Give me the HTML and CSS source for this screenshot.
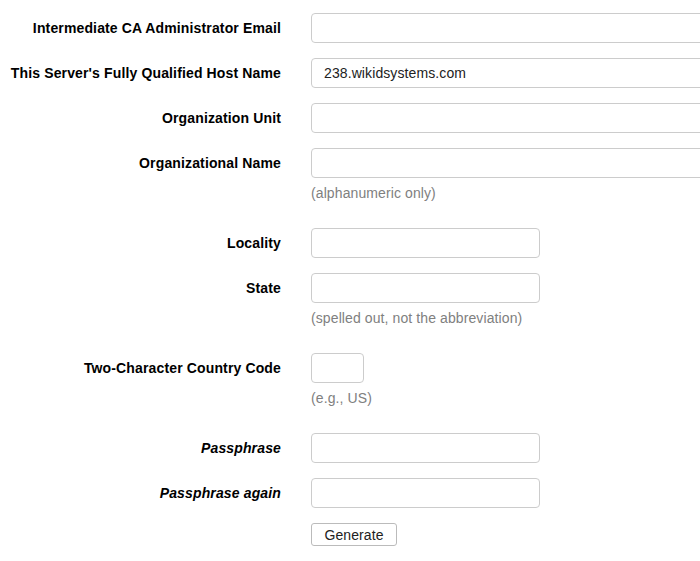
FILE: index.html
```html
<!DOCTYPE html>
<html>
<head>
<meta charset="utf-8">
<link rel="stylesheet" href="styles.css">
</head>
<body>
<form class="form">
  <div class="row">
    <label class="label">Intermediate CA Administrator Email</label>
    <div class="controls"><input class="input wide" type="text"></div>
  </div>
  <div class="row">
    <label class="label">This Server's Fully Qualified Host Name</label>
    <div class="controls"><input class="input wide" type="text" value="238.wikidsystems.com"></div>
  </div>
  <div class="row">
    <label class="label">Organization Unit</label>
    <div class="controls"><input class="input wide" type="text"></div>
  </div>
  <div class="row">
    <label class="label">Organizational Name</label>
    <div class="controls"><input class="input wide" type="text"><p class="help">(alphanumeric only)</p></div>
  </div>
  <div class="row">
    <label class="label">Locality</label>
    <div class="controls"><input class="input medium" type="text"></div>
  </div>
  <div class="row">
    <label class="label">State</label>
    <div class="controls"><input class="input medium" type="text"><p class="help">(spelled out, not the abbreviation)</p></div>
  </div>
  <div class="row">
    <label class="label">Two-Character Country Code</label>
    <div class="controls"><input class="input mini" type="text"><p class="help">(e.g., US)</p></div>
  </div>
  <div class="row">
    <label class="label italic">Passphrase</label>
    <div class="controls"><input class="input medium" type="password"></div>
  </div>
  <div class="row">
    <label class="label italic">Passphrase again</label>
    <div class="controls"><input class="input medium" type="password"></div>
  </div>
  <div class="row">
    <div class="label"></div>
    <div class="controls"><button class="btn" type="button">Generate</button></div>
  </div>
</form>
</body>
</html>
```

FILE: styles.css
```css
html, body {
  margin: 0;
  padding: 0;
  background: #fff;
}
body {
  font-family: "Liberation Sans", Arial, sans-serif;
  font-size: 14px;
  color: #333;
  overflow: hidden;
}
.form {
  width: 700px;
  padding-top: 13px;
}
.row {
  display: flex;
  align-items: flex-start;
  margin-bottom: 15px;
}
.label {
  flex: 0 0 281px;
  text-align: right;
  font-weight: bold;
  color: #000;
  line-height: 30px;
  height: 30px;
  letter-spacing: 0.14px;
}
.label.italic {
  font-style: italic;
}
.controls {
  margin-left: 30px;
  flex: 1 1 auto;
  min-width: 0;
  overflow: hidden;
}
.input {
  display: block;
  box-sizing: border-box;
  height: 30px;
  padding: 0 12px;
  border: 1px solid #ccc;
  border-radius: 4px;
  font-family: "Liberation Sans", Arial, sans-serif;
  font-size: 14px;
  letter-spacing: 0.1px;
  color: #222;
  background: #fff;
  outline: none;
}
.wide { width: 420px; }
.medium { width: 229px; }
.mini { width: 53px; }
.help {
  margin: 0;
  padding-top: 5px;
  line-height: 20px;
  height: 20px;
  margin-bottom: 10px;
  color: #808080;
  letter-spacing: 0.1px;
}
.btn {
  box-sizing: border-box;
  width: 86px;
  height: 23px;
  padding: 0;
  border: 1px solid #bbb;
  border-radius: 3px;
  background: #fff;
  font-family: "Liberation Sans", Arial, sans-serif;
  font-size: 14px;
  letter-spacing: 0.1px;
  color: #222;
}
```
